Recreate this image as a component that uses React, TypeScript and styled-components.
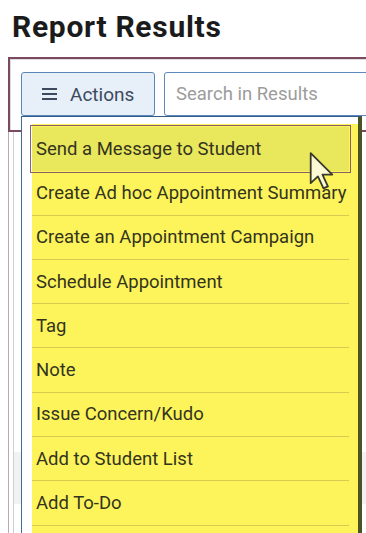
import styled, { createGlobalStyle } from 'styled-components';

const GlobalStyle = createGlobalStyle`
  html, body {
    margin: 0;
    padding: 0;
    background: #ffffff;
    overflow: hidden;
  }
  body {
    font-family: Roboto, "Liberation Sans", Arial, sans-serif;
    width: 366px;
    height: 533px;
  }
`;

const Page = styled.div`
  width: 366px;
  height: 533px;
  overflow: hidden;
`;

const Title = styled.h1`
  margin: 0;
  padding: 9px 0 0 12px;
  font-size: 30px;
  line-height: 36px;
  font-weight: 700;
  color: #1b1b1b;
  letter-spacing: 0.7px;
`;

const Panel = styled.section`
  margin: 12px 0 0 8px;
  height: 71px;
  border-top: 2px solid #7b4a60;
  border-left: 2px solid #7b4a60;
  border-bottom: 2px solid #7b4a60;
`;

const PanelInner = styled.div`
  height: 100%;
  box-sizing: border-box;
  border-top: 1px solid #dcdcdc;
  border-left: 1px solid #dcdcdc;
  padding: 12px 0 0 10px;
`;

const Toolbar = styled.div`
  position: relative;
  display: flex;
  gap: 9px;
  height: 44px;
`;

const ActionsButton = styled.button`
  flex: 0 0 134px;
  display: flex;
  align-items: center;
  gap: 13px;
  height: 44px;
  box-sizing: border-box;
  padding: 0 0 0 20px;
  border: 1px solid #5a86b8;
  border-radius: 3px;
  background: #e7eff8;
  color: #3b4a5c;
  font-family: Roboto, "Liberation Sans", sans-serif;
  font-size: 19px;
  cursor: pointer;
`;

const SearchBox = styled.input`
  flex: 0 0 260px;
  height: 44px;
  box-sizing: border-box;
  padding: 0 0 0 11px;
  border: 1px solid #5e89bc;
  border-radius: 3px;
  font-family: Roboto, "Liberation Sans", sans-serif;
  font-size: 18.5px;
  color: #333;
  &::placeholder {
    color: #9c9c9c;
  }
`;

const Menu = styled.div`
  position: absolute;
  top: 44px;
  left: 0;
  width: 341px;
  box-sizing: border-box;
  background: #ffffff;
  border-top: 1px solid #2f5d8c;
  border-left: 1px solid #3e6a96;
  border-right: 4px solid #4b5226;
  padding: 7px 0 0 10px;
  z-index: 2;
`;

const MenuList = styled.ul`
  list-style: none;
  margin: 0;
  padding: 3px 0 40px 0;
  background: #fdf45c;
`;

const MenuItem = styled.li<{ $active?: boolean }>`
  display: flex;
  align-items: center;
  height: 44.3px;
  box-sizing: border-box;
  margin: 0 9px 0 0;
  padding: 0 0 0 4px;
  border-bottom: 1px solid ${(p) => (p.$active ? 'transparent' : '#d6cb50')};
  font-size: 18.5px;
  color: #34341e;
  background: ${(p) => (p.$active ? '#e9e75c' : 'transparent')};
  outline: ${(p) => (p.$active ? '1.5px solid #8a5f66' : 'none')};
  outline-offset: 1.5px;
  white-space: nowrap;
`;

const Cursor = styled.svg`
  position: absolute;
  left: 287px;
  top: 35px;
  pointer-events: none;
`;

const Results = styled.div`
  margin-left: 8px;
  height: 420px;
  border-left: 1px solid #c6a3b3;
  padding-left: 4px;
`;

const ResultsInner = styled.div`
  height: 100%;
  border-left: 1px solid #cfcfcf;
  background: linear-gradient(#ffffff 0 320px, #f2f2f2 320px 372px, #ffffff 372px);
`;

const Hamburger = () => (
  <svg width="15" height="12" viewBox="0 0 15 12">
    <rect x="0" y="0" width="15" height="2" fill="#3b4a5c" />
    <rect x="0" y="5" width="15" height="2" fill="#3b4a5c" />
    <rect x="0" y="10" width="15" height="2" fill="#3b4a5c" />
  </svg>
);

const items = [
  'Send a Message to Student',
  'Create Ad hoc Appointment Summary',
  'Create an Appointment Campaign',
  'Schedule Appointment',
  'Tag',
  'Note',
  'Issue Concern/Kudo',
  'Add to Student List',
  'Add To-Do',
];

const App = () => {
  return (
    <Page>
      <GlobalStyle />
      <Title>Report Results</Title>
      <Panel>
        <PanelInner>
          <Toolbar>
            <ActionsButton>
              <Hamburger />
              Actions
            </ActionsButton>
            <SearchBox placeholder="Search in Results" />
            <Menu>
              <MenuList>
                {items.map((item, i) => (
                  <MenuItem key={item} $active={i === 0}>
                    {item}
                  </MenuItem>
                ))}
              </MenuList>
              <Cursor width="27" height="38" viewBox="0 0 13 19">
                <path
                  d="M0.6 0.6 L0.6 15.6 L4.2 12.2 L7 18.2 L9.2 17.2 L6.5 11.3 L11.4 11.3 Z"
                  fill="#fbfad4"
                  stroke="#3a3a2a"
                  strokeWidth="0.9"
                  strokeLinejoin="round"
                />
              </Cursor>
            </Menu>
          </Toolbar>
        </PanelInner>
      </Panel>
      <Results>
        <ResultsInner />
      </Results>
    </Page>
  );
};

export default App;
